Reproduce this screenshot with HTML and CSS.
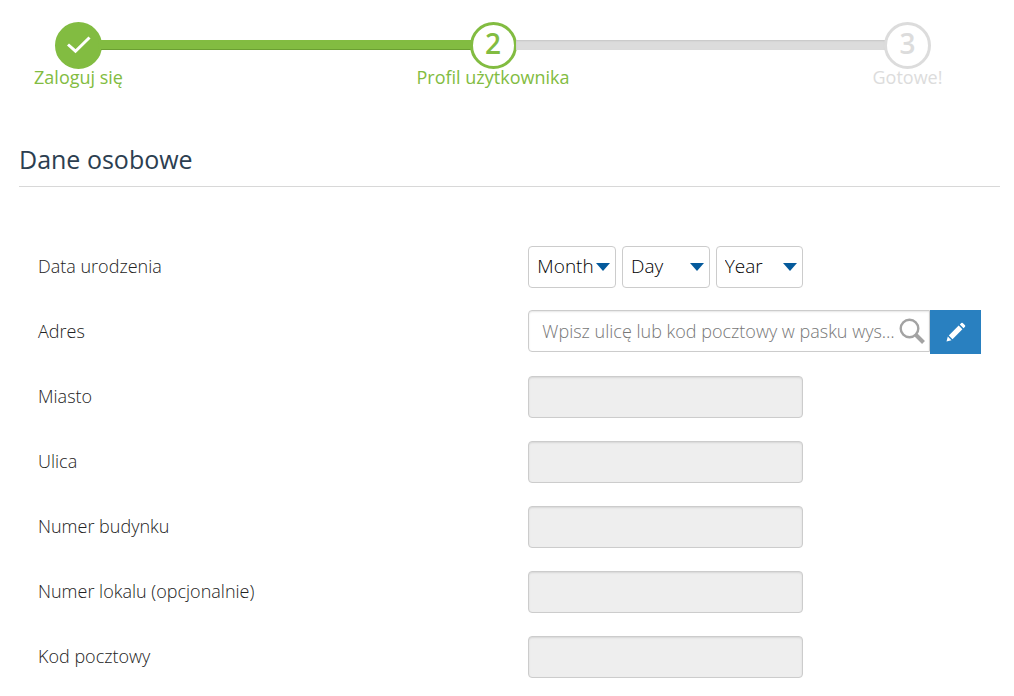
FILE: index.html
```
<!DOCTYPE html>
<html lang="pl">
<head>
  <meta charset="UTF-8">
  <meta name="viewport" content="width=device-width, initial-scale=1">
  <title>Profil użytkownika</title>
  <link rel="stylesheet" href="styles.css">
</head>
<body>
  <ol class="steps">
    <li class="step done">
      <span class="circle">
        <svg width="24" height="18" viewBox="0 0 24 18"><path d="M1 8.5 L8.5 15.2 L22.5 1.5" fill="none" stroke="#fff" stroke-width="3"/></svg>
      </span>
      <span class="step-name">Zaloguj się</span>
    </li>
    <li class="bar done" aria-hidden="true"></li>
    <li class="step active" aria-current="step">
      <span class="circle">2</span>
      <span class="step-name">Profil użytkownika</span>
    </li>
    <li class="bar" aria-hidden="true"></li>
    <li class="step">
      <span class="circle">3</span>
      <span class="step-name">Gotowe!</span>
    </li>
  </ol>

  <h1>Dane osobowe</h1>

  <form class="profile">
    <div class="row">
      <label for="month">Data urodzenia</label>
      <div class="field date">
        <select id="month"><option>Month</option></select>
        <select id="day" aria-label="Day"><option>Day</option></select>
        <select id="year" aria-label="Year"><option>Year</option></select>
      </div>
    </div>
    <div class="row">
      <label for="address">Adres</label>
      <div class="address">
        <div class="search">
          <input type="text" id="address" placeholder="Wpisz ulicę lub kod pocztowy w pasku wyszukiwania">
          <svg class="search-icon" width="26" height="26" viewBox="0 0 26 26" fill="none" stroke="#a3a3a3"><circle cx="10.5" cy="10.5" r="8.8" stroke-width="2.4"/><path d="M17 17 L24.5 24.5" stroke-width="4"/></svg>
        </div>
        <button type="button" class="edit" aria-label="Edytuj adres">
          <svg width="20" height="20" viewBox="0 0 20 20" fill="#fff"><path d="M0.5 19.5 L1.8 14.5 L5.5 18.2 Z M2.8 13.5 L12.7 3.6 L16.4 7.3 L6.5 17.2 Z M13.8 2.5 L15.3 1 Q16 0.4 16.7 1 L19 3.3 Q19.6 4 19 4.7 L17.5 6.2 Z"/></svg>
        </button>
      </div>
    </div>
    <div class="row">
      <label for="city">Miasto</label>
      <input type="text" class="field" id="city" disabled>
    </div>
    <div class="row">
      <label for="street">Ulica</label>
      <input type="text" class="field" id="street" disabled>
    </div>
    <div class="row">
      <label for="building">Numer budynku</label>
      <input type="text" class="field" id="building" disabled>
    </div>
    <div class="row">
      <label for="flat">Numer lokalu (opcjonalnie)</label>
      <input type="text" class="field" id="flat" disabled>
    </div>
    <div class="row">
      <label for="postcode">Kod pocztowy</label>
      <input type="text" class="field" id="postcode" disabled>
    </div>
  </form>
</body>
</html>
```
FILE: styles.css
```
* {
  box-sizing: border-box;
}
body {
  margin: 0;
  padding: 22px 14px 12px 19px;
  font-family: "Open Sans", sans-serif;
  font-size: 18px;
  font-weight: 300;
  color: #222;
  background: #fff;
}
.steps {
  display: flex;
  align-items: flex-start;
  list-style: none;
  margin: 0;
  padding: 0 69px 0 36px;
  color: #dcdcdc;
}
.step {
  display: flex;
  flex-direction: column;
  align-items: center;
  width: 47px;
}
.step.done, .step.active {
  color: #82bc41;
}
.circle {
  display: flex;
  align-items: center;
  justify-content: center;
  width: 47px;
  height: 47px;
  padding-bottom: 6px;
  border: 3px solid currentColor;
  border-radius: 50%;
  font-size: 28px;
  font-weight: 600;
  line-height: 34px;
}
.done .circle {
  padding: 0 0 2px;
  background: #82bc41;
}
.step-name {
  font-weight: 400;
  line-height: 16px;
  white-space: nowrap;
}
.bar {
  flex: 1;
  height: 10px;
  margin: 18px -1px 0;
  background: #dcdcdc;
  box-shadow: inset 0 1px 2px rgba(0, 0, 0, 0.1);
}
.bar.done {
  background: #82bc41;
  box-shadow: inset 0 -1px 0 #6b9f32;
}
h1 {
  margin: 56px 0 58px;
  padding-bottom: 9px;
  border-bottom: 1px solid #d8d8d8;
  font-size: 25px;
  font-weight: 400;
  line-height: 36px;
  color: #2c3e50;
}
.profile {
  display: flex;
  flex-direction: column;
  gap: 21px;
  padding: 0 19px;
}
.row {
  display: grid;
  grid-template-columns: 52% 1fr;
  align-items: center;
  min-height: 44px;
}
label {
  padding-bottom: 2px;
  line-height: 24px;
}
.field {
  width: 275px;
}
.date {
  display: flex;
  gap: 6px;
}
input, select {
  height: 42px;
  border: 1px solid #ccc;
  border-radius: 4px;
  background: #fff;
  font: inherit;
  color: #222;
}
input {
  box-shadow: inset 0 1px 2px rgba(0, 0, 0, 0.1);
}
input:disabled {
  background: #eee;
}
select {
  flex: 1;
  min-width: 0;
  padding: 0 0 2px 8px;
  appearance: none;
  font-size: 19px;
  color: #000;
  background: url("data:image/svg+xml,%3Csvg xmlns='http://www.w3.org/2000/svg' width='14' height='8'%3E%3Cpath d='M0 0H14L7 8Z' fill='%23055a9c'/%3E%3C/svg%3E") no-repeat right 5px center;
}
.address {
  display: flex;
  align-items: flex-start;
}
.search {
  position: relative;
  flex: 1;
}
.search input {
  width: 100%;
  padding: 0 30px 0 13px;
  border-radius: 4px 0 0 4px;
  text-overflow: ellipsis;
}
.search input::placeholder {
  color: #777;
}
.search-icon {
  position: absolute;
  top: 8px;
  right: 5px;
}
.edit {
  display: flex;
  align-items: center;
  justify-content: center;
  width: 51px;
  height: 44px;
  padding: 0;
  border: 0;
  background: #2980c0;
  cursor: pointer;
}
```
